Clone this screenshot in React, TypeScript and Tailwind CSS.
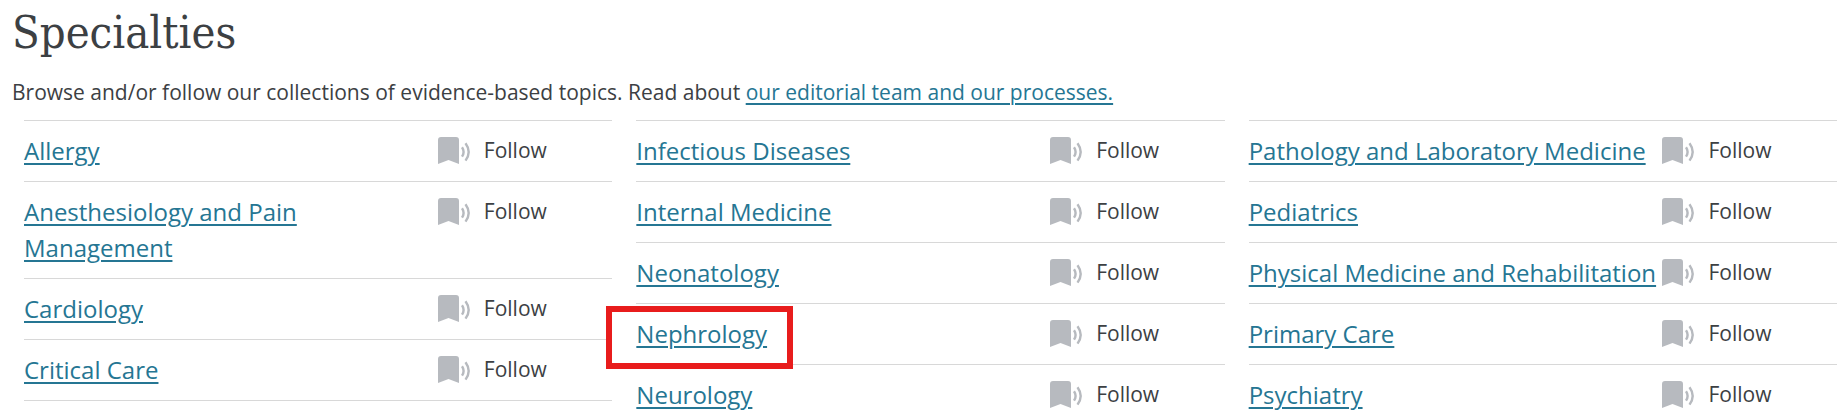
const columns = [
  ["Allergy", "Anesthesiology and Pain Management", "Cardiology", "Critical Care"],
  [
    "Infectious Diseases",
    "Internal Medicine",
    "Neonatology",
    "Nephrology",
    "Neurology",
  ],
  [
    "Pathology and Laboratory Medicine",
    "Pediatrics",
    "Physical Medicine and Rehabilitation",
    "Primary Care",
    "Psychiatry",
  ],
];

const highlighted = "Nephrology";

const FollowIcon = () => (
  <svg
    className="h-[27px] w-8 shrink-0"
    viewBox="0 0 32 27"
    fill="none"
    aria-hidden="true"
  >
    <path d="M0 27V3a3 3 0 0 1 3-3h15a3 3 0 0 1 3 3v24l-10.500-4z" fill="#b7babf" />
    <path
      d="M24 10.200q3.200 4.700 0 9.400M27.500 6.200q6.400 8.700 0 17.400"
      stroke="#b7babf"
      strokeWidth="2.400"
    />
  </svg>
);

const Row = ({ name }: { name: string }) => (
  <li className="flex items-start border-t border-[#d8d8d8] py-3 last:border-b">
    <div className="w-[70%] text-2xl leading-9">
      <span className="relative">
        <a
          href="#"
          className="text-[#257693] underline decoration-2 underline-offset-3"
        >
          {name}
        </a>
        {name === highlighted && (
          <span className="pointer-events-none absolute -top-[11px] -right-[26px] -left-[30px] h-[63px] border-6 border-[#e81c1c]" />
        )}
      </span>
    </div>
    <button
      type="button"
      className="flex items-center gap-3.5 pt-[3px] pl-0.5 text-[21px] leading-7 text-[#3c4043]"
    >
      <FollowIcon />
      Follow
    </button>
  </li>
);

const App = () => {
  return (
    <main className="bg-white pt-2 font-['Open_Sans',sans-serif] text-[#3c4043]">
      <h1 className="px-3 pt-px font-['DejaVu_Serif_Condensed','DejaVu_Serif',serif] text-[45px] leading-12">
        Specialties
      </h1>
      <p className="mt-[19px] px-3 text-[21px] leading-8">
        Browse and/or follow our collections of evidence-based topics. Read
        about{" "}
        <a
          href="#"
          className="text-[#257693] underline decoration-2 underline-offset-3"
        >
          our editorial team and our processes.
        </a>
      </p>
      <div className="mt-3 grid grid-cols-3 items-start gap-6 pr-[5px] pl-6">
        {columns.map((names) => (
          <ul key={names[0]}>
            {names.map((name) => (
              <Row key={name} name={name} />
            ))}
          </ul>
        ))}
      </div>
    </main>
  );
};

export default App;
